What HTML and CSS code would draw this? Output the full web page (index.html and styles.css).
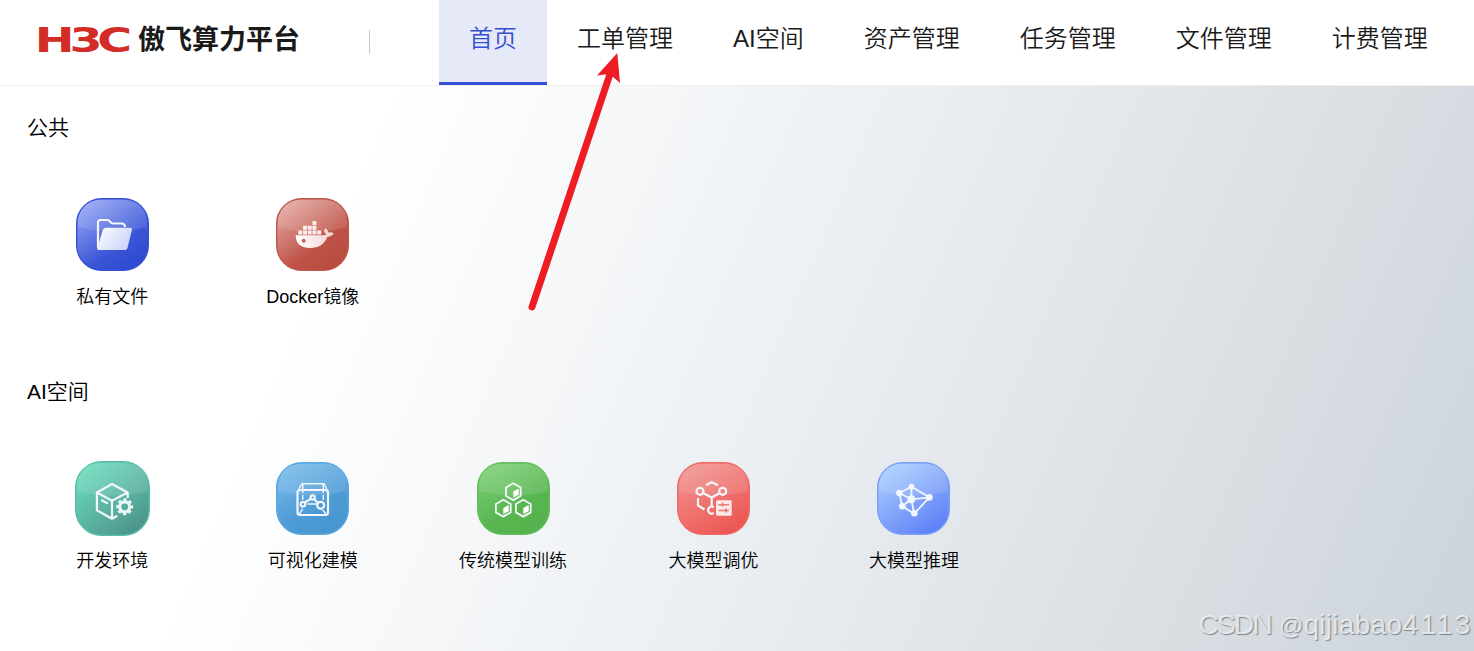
FILE: index.html
```html
<!DOCTYPE html>
<html lang="zh-CN">
<head>
  <meta charset="UTF-8" />
  <title>傲飞算力平台</title>
  <link rel="stylesheet" href="styles.css">
</head>
<body>

  <!-- shared gradients -->
  <svg class="defs" width="0" height="0">
    <defs>
      <linearGradient id="gBlue" x1="0" y1="0" x2="0.75" y2="1"><stop offset="0" stop-color="#a3b2fa"/><stop offset="0.7" stop-color="#3a56d6"/><stop offset="1" stop-color="#3049cf"/></linearGradient>
      <linearGradient id="gRed" x1="0" y1="0" x2="0.75" y2="1"><stop offset="0" stop-color="#e8b5b0"/><stop offset="0.7" stop-color="#bf5347"/><stop offset="1" stop-color="#b94c40"/></linearGradient>
      <linearGradient id="gTeal" x1="0.1" y1="0" x2="0.9" y2="1"><stop offset="0" stop-color="#6de0bf"/><stop offset="1" stop-color="#4a8e88"/></linearGradient>
      <linearGradient id="gSky" x1="0.1" y1="0" x2="0.7" y2="1"><stop offset="0" stop-color="#7bbcec"/><stop offset="0.65" stop-color="#4e9cd6"/><stop offset="1" stop-color="#4896d0"/></linearGradient>
      <linearGradient id="gGreen" x1="0.1" y1="0" x2="0.7" y2="1"><stop offset="0" stop-color="#7fd278"/><stop offset="0.65" stop-color="#58b651"/><stop offset="1" stop-color="#55b24e"/></linearGradient>
      <linearGradient id="gCoral" x1="0.1" y1="0" x2="0.7" y2="1"><stop offset="0" stop-color="#f19693"/><stop offset="1" stop-color="#ec5652"/></linearGradient>
      <linearGradient id="gPeri" x1="0.1" y1="0" x2="0.8" y2="1"><stop offset="0" stop-color="#add4fe"/><stop offset="1" stop-color="#5c7df7"/></linearGradient>
      <linearGradient id="gFront" x1="0" y1="0" x2="1" y2="0.5"><stop offset="0" stop-color="#fff"/><stop offset="1" stop-color="#cdd5f8"/></linearGradient>
      <linearGradient id="gWhale" x1="0" y1="0" x2="1" y2="0"><stop offset="0" stop-color="#fff"/><stop offset="1" stop-color="#f3d3cf"/></linearGradient>
    </defs>
  </svg>

  <header class="header">
    <div class="brand">
      <svg class="logo" width="104" height="44" viewBox="0 0 104 44">
        <text class="logo-text" x="2" y="34" transform="scale(1.44 1)">H3C</text>
      </svg>
      <span class="brand-name">傲飞算力平台</span>
      <span class="divider"></span>
    </div>
    <nav class="nav">
      <a class="nav-item active">首页</a>
      <a class="nav-item">工单管理</a>
      <a class="nav-item">AI空间</a>
      <a class="nav-item">资产管理</a>
      <a class="nav-item">任务管理</a>
      <a class="nav-item">文件管理</a>
      <a class="nav-item">计费管理</a>
    </nav>
  </header>

  <main class="main">
    <section class="section">
      <h2 class="section-title">公共</h2>
      <div class="apps">
        <div class="app">
          <svg class="icon" viewBox="0 0 73 73">
            <rect x="0.7" y="0.7" width="71.6" height="71.6" rx="25" fill="url(#gBlue)" stroke="#3650d4" stroke-width="1.4"/>
            <path class="gloss" d="M2 29C2 10 9 2 26 2H47C64 2 71 10 71 29Q36.500 38 2 29Z"/>
            <path class="line" d="M22 50V24.500Q22 22 24.500 22H31Q33 22 34.200 23.800Q35.400 25.500 37.500 25.500H45.500Q49 25.500 49 29"/>
            <path d="M30 29.700H54Q56.500 29.700 55.900 32L51.500 50Q51 52 49 52H23Q20.800 52 21.400 50L26.800 32Q27.500 29.700 30 29.700Z" fill="url(#gFront)"/>
          </svg>
          <span class="label">私有文件</span>
        </div>
        <div class="app">
          <svg class="icon" viewBox="0 0 73 73">
            <rect x="0.7" y="0.7" width="71.6" height="71.6" rx="25" fill="url(#gRed)" stroke="#bd5549" stroke-width="1.4"/>
            <path class="gloss" d="M2 29C2 10 9 2 26 2H47C64 2 71 10 71 29Q36.500 38 2 29Z"/>
            <path d="M22.300 32.500h4v4h-4zM27 32.500h4v4h-4zM31.700 32.500h4v4h-4zM36.400 32.500h4v4h-4zM41.200 32.500h4v4h-4zM27 27.700h4v4h-4zM31.700 27.700h4v4h-4zM36.400 27.700h4v4h-4zM36.400 22.900h4v4h-4z" fill="#fcefed"/>
            <path d="M19.700 37.300H46.500Q50 37.300 50.500 36.500Q46.500 33.500 49.500 30.300Q52.300 32 52.300 34.500Q55.500 33.700 57.700 35.600Q56 38.700 51.500 38.700C48.500 46 43 50 34 50C24.500 50 19.700 45.500 19.700 37.300Z" fill="url(#gWhale)"/>
            <circle cx="27.700" cy="42.700" r="2" fill="#c4665c"/>
          </svg>
          <span class="label">Docker镜像</span>
        </div>
      </div>
    </section>

    <section class="section">
      <h2 class="section-title">AI空间</h2>
      <div class="apps">
        <div class="app">
          <svg class="icon icon-lg" viewBox="0 0 75 75">
            <rect x="0.7" y="0.7" width="73.6" height="73.6" rx="26" fill="url(#gTeal)" stroke="#58bda5" stroke-width="1.4"/>
            <path class="gloss" d="M2 30C2 10 9 2 26 2H49C66 2 73 10 73 30Q37.500 39 2 30Z"/>
            <path class="line" d="M52.700 37V31.500L37 23L21.900 31.500V49.300L37 57.700L42.300 54.700M21.900 31.500L37 39.700L52.700 31.500M37 39.700V57.700M26.300 39L33 42.600"/>
            <circle cx="49.700" cy="45.800" r="5" fill="none" stroke="#e9f6f3" stroke-width="3.200"/>
            <circle cx="49.700" cy="45.800" r="7.200" fill="none" stroke="#e9f6f3" stroke-width="2.600" stroke-dasharray="3.300 2.355" stroke-dashoffset="1.650"/>
          </svg>
          <span class="label">开发环境</span>
        </div>
        <div class="app">
          <svg class="icon" viewBox="0 0 73 73">
            <rect x="0.7" y="0.7" width="71.6" height="71.6" rx="25" fill="url(#gSky)" stroke="#5ba7de" stroke-width="1.4"/>
            <path class="gloss" d="M2 29C2 10 9 2 26 2H47C64 2 71 10 71 29Q36.500 38 2 29Z"/>
            <rect class="line" x="21.500" y="28" width="30.500" height="25" rx="2.500"/>
            <path class="line thin" d="M22.500 27.500L26 21.700H48L51 27.500M26.700 22V31M26.700 33V38M47.300 22V31M47.300 33V38M26.700 47L23.300 52M46.700 48L50 52M31.500 42H40.500"/>
            <path class="line" d="M28.800 40.500L35 36.800M38.300 37.300L42 41"/>
            <circle class="line" cx="27" cy="42.300" r="2.300"/>
            <circle class="line" cx="36.700" cy="35.400" r="2.100"/>
            <circle class="line" cx="44.700" cy="43.300" r="3.500"/>
          </svg>
          <span class="label">可视化建模</span>
        </div>
        <div class="app">
          <svg class="icon" viewBox="0 0 73 73">
            <rect x="0.7" y="0.7" width="71.6" height="71.6" rx="25" fill="url(#gGreen)" stroke="#62be5b" stroke-width="1.4"/>
            <path class="gloss" d="M2 29C2 10 9 2 26 2H47C64 2 71 10 71 29Q36.500 38 2 29Z"/>
            <g id="hex">
              <path class="line mid" d="M36.300 21.300L43.700 25.500V33.900L36.300 38.100L28.900 33.900V25.500Z"/>
              <path d="M36.300 29.600L41.700 26.500V32.700L36.300 35.800Z" fill="#fff"/>
            </g>
            <use href="#hex" x="-10" y="16.500"/>
            <use href="#hex" x="10" y="16.500"/>
          </svg>
          <span class="label">传统模型训练</span>
        </div>
        <div class="app">
          <svg class="icon" viewBox="0 0 73 73">
            <rect x="0.7" y="0.7" width="71.6" height="71.6" rx="25" fill="url(#gCoral)" stroke="#ee6a67" stroke-width="1.4"/>
            <path class="gloss" d="M2 29C2 10 9 2 26 2H47C64 2 71 10 71 29Q36.500 38 2 29Z"/>
            <circle class="line" cx="23" cy="29.300" r="3.500"/>
            <circle class="line" cx="45.700" cy="29.300" r="3.500"/>
            <path class="line" d="M29 23.300L34.700 20.200L41 23.300M26.300 31.300L34.700 35.500L42.500 31.300M34.700 35.500V44M21 36V43.500L27.500 47.500M36.800 45.300A3.500 3.500 0 1 0 36.800 50.900"/>
            <rect x="39" y="38.300" width="15.700" height="15.500" rx="1.500" fill="#fde9e8"/>
            <path d="M41.500 42.700H52M41.500 48.500H52" stroke="#ee7a77" stroke-width="1.600"/>
            <path d="M45.500 40.800V44.500M49 46.600V50.400" stroke="#ee7a77" stroke-width="1.800"/>
          </svg>
          <span class="label">大模型调优</span>
        </div>
        <div class="app">
          <svg class="icon" viewBox="0 0 73 73">
            <rect x="0.7" y="0.7" width="71.6" height="71.6" rx="25" fill="url(#gPeri)" stroke="#7aa0f8" stroke-width="1.4"/>
            <path class="gloss" d="M2 29C2 10 9 2 26 2H47C64 2 71 10 71 29Q36.500 38 2 29Z"/>
            <path class="line mid" d="M34.500 24.700L22.300 31L25.300 44.300L37.300 51.700L52.300 35.300ZM34.300 37.300L34.500 24.700M34.300 37.300L22.300 31M34.300 37.300L25.300 44.300M34.300 37.300L37.300 51.700M34.300 37.300L52.300 35.300"/>
            <g fill="#f3f6ff">
              <circle cx="34.500" cy="24.700" r="3"/>
              <circle cx="22.300" cy="31" r="3.200"/>
              <circle cx="52.300" cy="35.300" r="3.400"/>
              <circle cx="34.300" cy="37.300" r="4"/>
              <circle cx="25.300" cy="44.300" r="3.300"/>
              <circle cx="37.300" cy="51.200" r="3.300"/>
            </g>
          </svg>
          <span class="label">大模型推理</span>
        </div>
      </div>
    </section>
  </main>

  <!-- pointer to the work order menu -->
  <svg class="arrow" width="100" height="264" viewBox="525 50 100 264">
    <path d="M532 307L610 74" stroke="#ee1c25" stroke-width="7" stroke-linecap="round"/>
    <path d="M617.300 53L597 75.500L606.700 74.300L612.300 76.300L620 83Z" fill="#ee1c25"/>
  </svg>
  <div class="watermark"><span class="wm-site">CSDN</span> <span class="wm-at">@</span>qijiabao<span class="wm-num">4113</span></div>

</body>
</html>
```
FILE: styles.css
```css
* {
  box-sizing: border-box;
}

body {
  margin: 0;
  height: 651px;
  position: relative;
  overflow: hidden;
  display: flex;
  flex-direction: column;
  background: #fff;
  color: #000;
  font-family: "Liberation Sans", "Noto Sans CJK SC", sans-serif;
}

.defs {
  position: absolute;
}

.header {
  height: 86px;
  flex: none;
  display: flex;
  background: #fff;
  border-bottom: 1px solid #f0f0f0;
}

.brand {
  width: 439px;
  height: 80px;
  padding-left: 32px;
  display: flex;
  align-items: center;
}

.logo {
  flex: none;
}

.logo-text {
  font-family: "DejaVu Sans", sans-serif;
  font-weight: bold;
  font-size: 33px;
  letter-spacing: -3.6px;
  fill: #d32b26;
}

.brand-name {
  margin-left: 2px;
  font-size: 27px;
  font-weight: bold;
  line-height: 40px;
  color: #1a1a1a;
  white-space: nowrap;
}

.divider {
  width: 1px;
  height: 24px;
  margin: 3px 0 0 69px;
  background: #c8c8c8;
}

.nav {
  display: flex;
}

.nav-item {
  height: 85px;
  padding: 0 30px;
  font-size: 24px;
  line-height: 78px;
  color: #1a1a1a;
  font-weight: 350;
  white-space: nowrap;
}

.nav-item.active {
  color: #344fd2;
  background: #e6e9f8;
  border-bottom: 3px solid #344fd2;
}

.main {
  flex: 1;
  background: linear-gradient(113deg, #fff 23%, #e9edf1 57%, #d9dee3 82%, #cbd3db 100%);
}

.section {
  height: 264px;
  padding-top: 27px;
}

.section-title {
  margin: 0 0 0 27px;
  font-size: 21px;
  font-weight: 350;
  line-height: 30px;
}

.apps {
  display: flex;
  padding-left: 12.15px;
  margin-top: 55px;
}

.app {
  width: 200.4px;
  display: flex;
  flex-direction: column;
  align-items: center;
}

.icon {
  width: 73px;
  height: 73px;
}

.icon-lg {
  width: 75px;
  height: 75px;
  margin: -1px 0;
}

.label {
  margin-top: 11px;
  font-size: 18px;
  font-weight: 350;
  line-height: 30px;
  white-space: nowrap;
}

.gloss {
  fill: #fff;
  fill-opacity: 0.11;
}

.line {
  fill: none;
  stroke: #f3f6fb;
  stroke-width: 2.2;
  stroke-linejoin: round;
}

.line.mid {
  stroke-width: 1.8;
}

.line.thin {
  stroke-width: 1.4;
}

.arrow {
  position: absolute;
  left: 525px;
  top: 50px;
}

.watermark {
  position: absolute;
  right: 1px;
  bottom: 9px;
  font-size: 28px;
  line-height: 32px;
  letter-spacing: 0.3px;
  white-space: nowrap;
  color: rgba(240, 242, 244, 0.85);
  text-shadow: 1px 1px 1px rgba(90, 95, 100, 0.7);
}

.wm-site {
  letter-spacing: -1.7px;
}

.wm-at {
  font-size: 24px;
  letter-spacing: 0;
}

.wm-num {
  letter-spacing: 2.6px;
}
```
